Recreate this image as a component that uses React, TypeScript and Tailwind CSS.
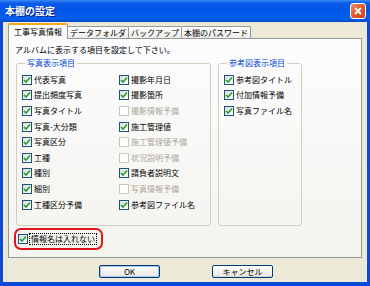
import React from 'react'

const font = { fontFamily: '"Noto Sans CJK JP", "Noto Sans", sans-serif' }

interface Item {
  label: string
  checked: boolean
  disabled?: boolean
}

const col1: Item[] = [
  { label: '代表写真', checked: true },
  { label: '提出頻度写真', checked: true },
  { label: '写真タイトル', checked: true },
  { label: '写真-大分類', checked: true },
  { label: '写真区分', checked: true },
  { label: '工種', checked: true },
  { label: '種別', checked: true },
  { label: '細別', checked: true },
  { label: '工種区分予備', checked: true },
]

const col2: Item[] = [
  { label: '撮影年月日', checked: true },
  { label: '撮影箇所', checked: true },
  { label: '撮影情報予備', checked: false, disabled: true },
  { label: '施工管理値', checked: true },
  { label: '施工管理値予備', checked: false, disabled: true },
  { label: '状況説明予備', checked: false, disabled: true },
  { label: '請負者説明文', checked: true },
  { label: '写真情報予備', checked: false, disabled: true },
  { label: '参考図ファイル名', checked: true },
]

const col3: Item[] = [
  { label: '参考図タイトル', checked: true },
  { label: '付加情報予備', checked: true },
  { label: '写真ファイル名', checked: true },
]

function Box({ checked, disabled }: { checked: boolean; disabled?: boolean }) {
  return (
    <span
      className={
        disabled
          ? 'w-[10px] h-[10px] shrink-0 border border-[#CAC8BB] bg-white'
          : 'w-[10px] h-[10px] shrink-0 border border-[#1C5180] bg-[linear-gradient(135deg,#DCDCD6_0%,#F4F4F0_60%,#FFFFFF_100%)] flex items-center justify-center'
      }
    >
      {checked && (
        <svg width="8" height="8" viewBox="0 0 8 8">
          <polyline points="1,4 3,6 7,1.5" fill="none" stroke="#21A121" strokeWidth="1.6" />
        </svg>
      )}
    </span>
  )
}

function Row({ item }: { item: Item }) {
  return (
    <div className="h-[15.6px] flex items-center gap-[2px]">
      <Box checked={item.checked} disabled={item.disabled} />
      <span className={item.disabled ? 'text-[#ACA899]' : 'text-black'}>{item.label}</span>
    </div>
  )
}

export default function App() {
  return (
    <div
      className="w-[370px] h-[286px] bg-[#0A4AD6] flex flex-col text-[8px] leading-[10px] overflow-hidden"
      style={font}
    >
      {/* title bar */}
      <div className="h-[22px] shrink-0 flex items-center justify-between pl-[5px] pr-[4px] bg-[linear-gradient(to_bottom,#3B8CF5_0%,#0A5CE9_14%,#0055E5_50%,#0360F0_85%,#0847C9_100%)]">
        <span className="text-white font-bold text-[10px] leading-[12px] [text-shadow:1px_1px_0_#0A1E8C]">本棚の設定</span>
        <div className="w-[16px] h-[16px] rounded-[3px] border border-white bg-[linear-gradient(135deg,#F0906C_0%,#E2582E_50%,#C8421C_100%)] flex items-center justify-center">
          <svg width="8" height="8" viewBox="0 0 8 8">
            <path d="M1 1 L7 7 M7 1 L1 7" stroke="white" strokeWidth="1.8" />
          </svg>
        </div>
      </div>

      {/* body */}
      <div className="flex-1 mx-[3px] mb-[4px] bg-[#ECE9D8] flex flex-col px-[5px] pt-[1px]">
        {/* tabs */}
        <div className="h-[15px] flex items-end">
          <div className="h-[16px] -mb-[1px] relative z-10 px-[5px] flex items-center bg-[#FCFCFE] border-x border-[#919B9C] border-t-2 border-t-[#F5A623] rounded-t-[2px]">
            工事写真情報
          </div>
          <div className="h-[12px] px-[2px] flex items-center border-t border-r border-[#919B9C] bg-[linear-gradient(to_bottom,#FFFFFF,#ECEBE6)] rounded-tr-[2px]">
            データフォルダ
          </div>
          <div className="h-[12px] px-[2px] flex items-center border-t border-r border-[#919B9C] bg-[linear-gradient(to_bottom,#FFFFFF,#ECEBE6)] rounded-tr-[2px]">
            バックアップ
          </div>
          <div className="h-[12px] px-[2px] flex items-center border-t border-r border-[#919B9C] bg-[linear-gradient(to_bottom,#FFFFFF,#ECEBE6)] rounded-tr-[2px]">
            本棚のパスワード
          </div>
        </div>

        {/* panel */}
        <div className="h-[220px] border border-[#919B9C] bg-[linear-gradient(to_bottom,#FCFCFE,#F4F3EE)] pl-[6px] pt-[6px]">
          <div className="h-[10px]">アルバムに表示する項目を設定して下さい。</div>

          <div className="flex mt-[3px] ml-[1px]">
            <fieldset className="w-[195px] h-[168px] border border-[#D0D0BF] rounded-[3px] pl-[5px]">
              <legend className="ml-[3px] px-[2px] text-[#0046D5] h-[10px]">写真表示項目</legend>
              <div className="flex pt-[4px]">
                <div className="w-[97px] flex flex-col">
                  {col1.map((it) => (
                    <Row key={it.label} item={it} />
                  ))}
                </div>
                <div className="flex flex-col">
                  {col2.map((it) => (
                    <Row key={it.label} item={it} />
                  ))}
                </div>
              </div>
            </fieldset>

            <fieldset className="ml-[7px] w-[84px] h-[168px] border border-[#D0D0BF] rounded-[3px] pl-[5px]">
              <legend className="ml-[3px] px-[2px] text-[#0046D5] h-[10px]">参考図表示項目</legend>
              <div className="flex flex-col pt-[4px]">
                {col3.map((it) => (
                  <Row key={it.label} item={it} />
                ))}
              </div>
            </fieldset>
          </div>

          <div className="ml-[-1px] mt-[2px] w-[89px] h-[22px] border-2 border-[#E0141E] rounded-[7px] flex items-center pl-[2px] gap-[1px]">
            <Box checked={true} />
            <span className="border border-dotted border-black px-[1px] leading-[10px]">情報名は入れない</span>
          </div>
        </div>

        {/* buttons */}
        <div className="mt-[7px] flex pl-[91px] gap-[52px]">
          <button className="w-[61px] h-[13px] rounded-[2px] border border-[#003C74] bg-[linear-gradient(to_bottom,#FFFFFF,#ECEBE6_85%,#D6D0C5)] shadow-[inset_0_0_0_1px_#A9C6F4] flex items-center justify-center text-[8px] leading-[10px]">
            OK
          </button>
          <button className="w-[61px] h-[13px] rounded-[2px] border border-[#003C74] bg-[linear-gradient(to_bottom,#FFFFFF,#ECEBE6_85%,#D6D0C5)] flex items-center justify-center text-[8px] leading-[10px]">
            キャンセル
          </button>
        </div>
      </div>
    </div>
  )
}
